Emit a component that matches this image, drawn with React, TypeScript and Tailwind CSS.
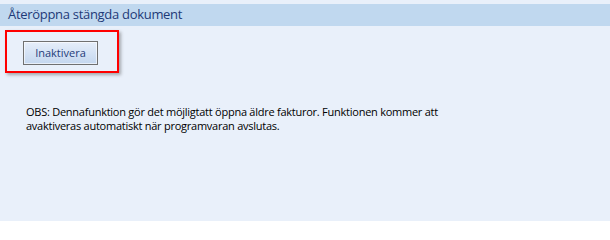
import React from "react";

const App = () => {
  return (
    <div
      className="w-[610px] h-[221px] bg-[#e9f0fa] pt-[4px] overflow-hidden"
      style={{ fontFamily: "'Open Sans', 'Noto Sans', sans-serif" }}
    >
      <div className="h-[22px] bg-[#c0d8ef] pl-[8px] flex items-center text-[13px] tracking-[-0.3px] text-[#1e3a78]">
        Återöppna stängda dokument
      </div>

      <div className="ml-[5px] mt-[4px] w-[114px] h-[43px] border-2 border-[#ff0000] shadow-[2px_2px_3px_rgba(80,80,80,0.45)] pl-[16px] pt-[9px]">
        <button className="w-[75px] h-[24px] border border-[#707070] bg-gradient-to-b from-[#e6eefa] to-[#c4d7ef] shadow-[inset_0_0_0_1px_rgba(255,255,255,0.6)] text-[11px] text-[#1f3d7a] flex items-center justify-center">
          Inaktivera
        </button>
      </div>

      <p className="mt-[32px] pl-[26px] text-[11px] leading-[14px] text-black tracking-[-0.25px]">
        OBS: Dennafunktion gör det möjligtatt öppna äldre fakturor. Funktionen kommer att
        <br />
        avaktiveras automatiskt när programvaran avslutas.
      </p>
    </div>
  );
};

export default App;
